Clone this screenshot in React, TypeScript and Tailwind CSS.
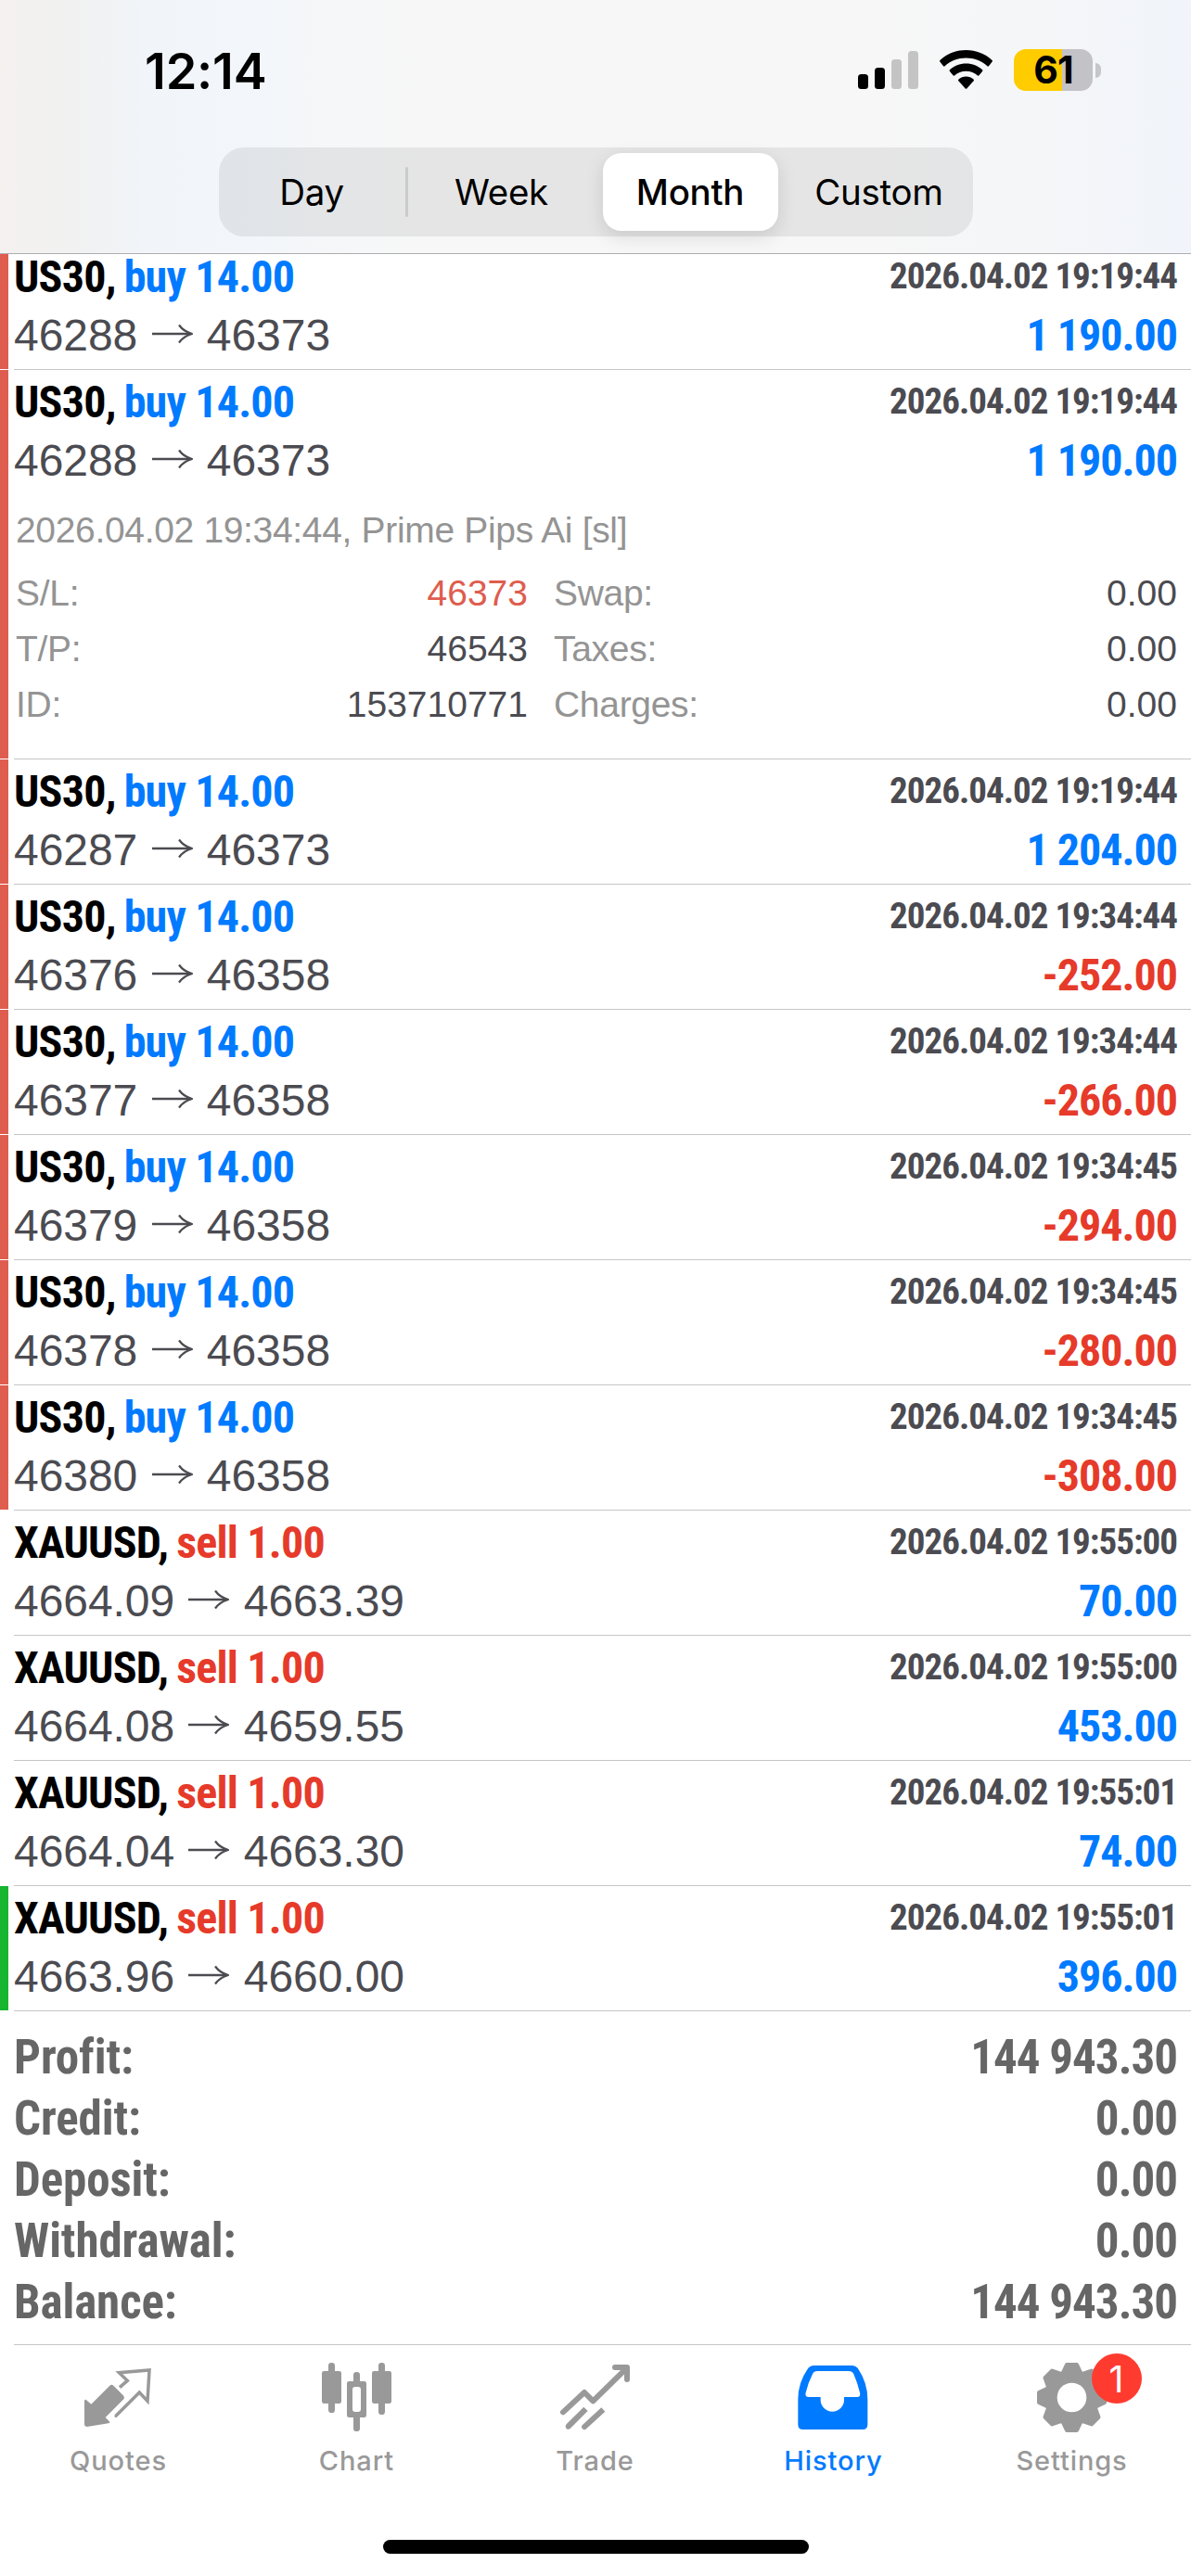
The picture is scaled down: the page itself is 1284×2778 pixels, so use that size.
import React from "react";

const COND = "font-['Roboto','Liberation_Sans',sans-serif] font-bold [font-stretch:75%]";
const HELV = "font-['Liberation_Sans',Arial,sans-serif]";
const SF = "font-['Inter','Liberation_Sans',sans-serif]";

type Deal = {
  symbol: string;
  side: "buy" | "sell";
  volume: string;
  from: string;
  to: string;
  time: string;
  profit: string;
  mark?: "red" | "green";
  details?: boolean;
};

const us30 = (from: string, to: string, time: string, profit: string, details = false): Deal => ({
  symbol: "US30",
  side: "buy",
  volume: "14.00",
  from,
  to,
  time: `2026.04.02 ${time}`,
  profit,
  mark: "red",
  details,
});

const gold = (from: string, to: string, time: string, profit: string, mark?: "green"): Deal => ({
  symbol: "XAUUSD",
  side: "sell",
  volume: "1.00",
  from,
  to,
  time: `2026.04.02 ${time}`,
  profit,
  mark,
});

const deals: Deal[] = [
  us30("46288", "46373", "19:19:44", "1 190.00"),
  us30("46288", "46373", "19:19:44", "1 190.00", true),
  us30("46287", "46373", "19:19:44", "1 204.00"),
  us30("46376", "46358", "19:34:44", "-252.00"),
  us30("46377", "46358", "19:34:44", "-266.00"),
  us30("46379", "46358", "19:34:45", "-294.00"),
  us30("46378", "46358", "19:34:45", "-280.00"),
  us30("46380", "46358", "19:34:45", "-308.00"),
  gold("4664.09", "4663.39", "19:55:00", "70.00"),
  gold("4664.08", "4659.55", "19:55:00", "453.00"),
  gold("4664.04", "4663.30", "19:55:01", "74.00"),
  gold("4663.96", "4660.00", "19:55:01", "396.00", "green"),
];

const summary = [
  ["Profit:", "144 943.30"],
  ["Credit:", "0.00"],
  ["Deposit:", "0.00"],
  ["Withdrawal:", "0.00"],
  ["Balance:", "144 943.30"],
];

function StatusBar() {
  return (
    <div className="flex h-[159px] items-start justify-between pr-[97px] pl-[156px]">
      <div className={`${SF} mt-[46px] text-[54px] leading-[62px] font-semibold tracking-[-0.2px] text-black`}>12:14</div>
      <div className="mt-[53px] flex items-start">
        <svg className="mt-[2px] h-[41px] w-[65px]" viewBox="0 0 65 41">
          <rect x="0" y="25" width="11" height="16" rx="3.5" />
          <rect x="18" y="18" width="11" height="23" rx="3.5" />
          <rect x="36" y="9" width="11" height="32" rx="3.5" fill="#c4c4c5" />
          <rect x="54" y="0" width="11" height="41" rx="3.5" fill="#c4c4c5" />
        </svg>
        <svg className="mt-[1px] ml-[23px] h-[42px] w-[57px]" viewBox="0 0 57 42">
          <path d="M28.5 0C17.600 0 7.700 4.100.400 11Q-.300 11.800.300 12.600L4 17.200Q4.800 18 5.600 17.300C11.600 11.800 19.700 8.600 28.500 8.600S45.400 11.800 51.400 17.300Q52.200 18 53 17.200L56.700 12.600Q57.300 11.800 56.600 11C49.300 4.100 39.400 0 28.500 0Z" />
          <path d="M28.500 14.400C21.700 14.400 15.500 17 10.900 21.300Q10.200 22 10.800 22.800L14.500 27.300Q15.200 28 16 27.400C19.300 24.500 23.700 22.800 28.500 22.800S37.700 24.500 41 27.400Q41.800 28 42.500 27.300L46.200 22.800Q46.800 22 46.100 21.300C41.500 17 35.300 14.400 28.500 14.400Z" />
          <path d="M28.500 28.600C25.400 28.600 22.600 29.700 20.500 31.600Q19.700 32.400 20.400 33.200L27.500 41.300Q28.500 42.300 29.500 41.300L36.600 33.200Q37.300 32.400 36.500 31.600C34.400 29.700 31.600 28.600 28.500 28.600Z" />
        </svg>
        <div className="ml-[23px] flex items-center">
          <div className="flex h-[45px] w-[85px] items-center justify-center rounded-[13px] bg-[linear-gradient(90deg,#ffcc00_61.500%,#c2c2c7_61.500%)]">
            <span className={`${SF} text-[41px] leading-[45px] font-bold tracking-[-0.8px] text-black`}>61</span>
          </div>
          <div className="ml-[3px] h-[16px] w-[6px] rounded-r-full bg-[#c5c5ca]" />
        </div>
      </div>
    </div>
  );
}

function PeriodPicker() {
  const item = "flex h-[84px] items-center justify-center pt-[1px]";
  return (
    <div className={`${SF} mx-auto flex h-[96px] w-[813px] items-center rounded-[27px] bg-black/7 text-[38.500px] font-medium tracking-[-0.3px] text-black`}>
      <div className={`${item} w-[201px]`}><span className="font-normal">Day</span></div>
      <div className="h-[54px] w-[3px] rounded-full bg-[#cbcbcd]" />
      <div className={`${item} w-[210px] pr-[8px]`}><span className="font-normal">Week</span></div>
      <div className={`${item} w-[189px] rounded-[20px] bg-white shadow-[0_6px_20px_rgba(0,0,0,0.12)]`}>Month</div>
      <div className={`${item} w-[210px] pl-[8px]`}><span className="font-normal">Custom</span></div>
    </div>
  );
}

function Header() {
  return (
    <header className="relative z-10 h-[274px] border-b border-[#adadb0] bg-[linear-gradient(90deg,#f4f1ef_0%,#f1f1f1_6%,#f1f4f8_12%,#f3f6fa_22%,#f6f7f8_30%,#f7f7f7_36%,#f7f7f7_74%,#f4f6f8_88%,#f1f4fa_100%)]">
      <StatusBar />
      <PeriodPicker />
    </header>
  );
}

function Arrow() {
  return (
    <svg className="mx-[13.300px] inline-block h-[24px] w-[48px] align-[6px]" viewBox="0 0 48 24" fill="none">
      <path d="M2 12H42" stroke="#4b4b51" strokeWidth="2.600" />
      <path d="M31 2.500Q36 9.500 45 12Q36 14.500 31 21.500" stroke="#4b4b51" strokeWidth="2.200" strokeLinejoin="round" />
    </svg>
  );
}

function DetailCell({ label, value, red }: { label: string; value: string; red?: boolean }) {
  return (
    <div className="flex justify-between">
      <span className="tracking-[-0.3px]">{label}</span>
      <span className={red ? "text-[#de5d4f]" : "text-[#4b4b51]"}>{value}</span>
    </div>
  );
}

function Details() {
  return (
    <div className={`${HELV} pt-[8px] pb-[29px] pl-[2px] text-[39px] leading-[60px] text-[#949494]`}>
      <div className="tracking-[-0.330px]">2026.04.02 19:34:44, Prime Pips Ai [sl]</div>
      <div className="mt-[8px] grid grid-cols-[552px_672px] gap-x-[28px]">
        <DetailCell label="S/L:" value="46373" red />
        <DetailCell label="Swap:" value="0.00" />
        <DetailCell label="T/P:" value="46543" />
        <DetailCell label="Taxes:" value="0.00" />
        <DetailCell label="ID:" value="153710771" />
        <DetailCell label="Charges:" value="0.00" />
      </div>
    </div>
  );
}

function DealRow({ deal }: { deal: Deal }) {
  const bar = deal.mark === "red" ? "bg-[#de5d4f]" : deal.mark === "green" ? "bg-[#17b530]" : "";
  return (
    <div className="flex">
      <div className={`mb-px w-[9px] ${bar}`} />
      <div className="ml-[6px] flex-1 border-b border-[#c6c6c8] pr-[15px]">
        <div className={`${COND} flex h-[63px] items-start justify-between pt-[7px]`}>
          <div className="text-[48px] leading-[56px] tracking-[-0.8px] text-black">
            {deal.symbol},<span className="tracking-[-2px]"> </span>
            <span className={deal.side === "buy" ? "text-[#007aff]" : "text-[#e63a2a]"}>{deal.side} {deal.volume}</span>
          </div>
          <div className="text-[39px] leading-[55px] tracking-[-1px] text-[#4b4b51]">{deal.time}</div>
        </div>
        <div className="mt-[4px] flex h-[67px] justify-between leading-[62px]">
          <div className={`${HELV} text-[48px] tracking-[-0.050px] text-[#4b4b51]`}>
            {deal.from}
            <Arrow />
            {deal.to}
          </div>
          <div className={`${COND} text-[48px] tracking-[-1px] ${deal.profit.startsWith("-") ? "text-[#e63a2a]" : "text-[#007aff]"}`}>{deal.profit}</div>
        </div>
        {deal.details && (
          <div className="-mb-[1px] pt-[1px]">
            <Details />
          </div>
        )}
      </div>
    </div>
  );
}

function QuotesIcon() {
  return (
    <svg className="h-[80px] w-[80px]" viewBox="54 45 240 240">
      <path d="M63 176Q66 171 71 176L85 188L145 128Q151 123 157 128L190 161Q194 167 190 172L131 231L145 245Q146 249 141 250L72 261Q63 261 63 253Z" fill="#999" />
      <path d="M177 134L202 112L175 86L273 78L267 178L241 150L165 226H161" fill="none" stroke="#999" strokeWidth="10.500" strokeLinejoin="miter" />
    </svg>
  );
}

function ChartIcon() {
  return (
    <svg className="h-[80px] w-[80px]" viewBox="825 45 240 240" fill="#999">
      <rect x="831" y="81" width="63" height="105" rx="7" />
      <rect x="852" y="54" width="21" height="162" rx="10" />
      <rect x="993" y="81" width="63" height="105" rx="7" />
      <rect x="1014" y="54" width="21" height="168" rx="10" />
      <rect x="933" y="84" width="21" height="40" rx="10" />
      <rect x="933" y="222" width="21" height="54" rx="10" />
      <path fillRule="evenodd" d="M919 114H968Q975 114 975 121V224Q975 231 968 231H919Q912 231 912 224V121Q912 114 919 114ZM939 132Q930 132 930 141V204Q930 213 939 213H948Q957 213 957 204V141Q957 132 948 132Z" />
    </svg>
  );
}

function TradeIcon() {
  return (
    <svg className="h-[80px] w-[80px]" viewBox="36 45 240 240" fill="none" stroke="#999" strokeWidth="18" strokeLinejoin="round">
      <path d="M51 214L120 150L148 178L252 76M219 69H258V108" strokeLinecap="round" />
      <path d="M59 261A9 9 0 0 0 75 266L131 210L118 197L62 253Q59 256 59 261Z" fill="#999" stroke="none" />
      <path d="M111 261A9 9 0 0 0 127 267L187 212L175 199L115 254Q111 257 111 261Z" fill="#999" stroke="none" />
    </svg>
  );
}

function HistoryIcon() {
  return (
    <svg className="h-[80px] w-[80px]" viewBox="806 45 240 240" fill="#007aff">
      <path
        fillRule="evenodd"
        d="M860 63H985Q996 63 1003 71Q1035 118 1035 172V254Q1035 270 1019 270H826Q810 270 810 254V172Q810 118 843 71Q850 63 860 63ZM873 81Q861 81 857 91Q843 118 835 151Q831 165 845 165H883V174A38 38 0 0 0 959 174V165H1001Q1014 165 1010 151Q1002 118 990 91Q985 81 974 81Z"
      />
    </svg>
  );
}

function SettingsIcon() {
  return (
    <svg className="h-[80px] w-[80px]" viewBox="-39.500 -40.500 80 80" fill="#999">
      <circle r="30" />
      {[0, 45, 90, 135, 180, 225, 270, 315].map((a) => (
        <path key={a} d="M-9.500-27L-5.500-35.500H5.500L9.500-27Z" transform={`rotate(${a})`} stroke="#999" strokeWidth="4" strokeLinejoin="round" />
      ))}
      <circle r="15.800" fill="#fff" />
    </svg>
  );
}

const tabs = [
  { label: "Quotes", Icon: QuotesIcon },
  { label: "Chart", Icon: ChartIcon },
  { label: "Trade", Icon: TradeIcon },
  { label: "History", Icon: HistoryIcon, active: true },
  { label: "Settings", Icon: SettingsIcon, badge: "1" },
];

function TabBar() {
  return (
    <nav className={`${SF} -ml-[1px] grid h-[210px] grid-cols-5`}>
      {tabs.map(({ label, Icon, active, badge }) => (
        <div key={label} className="flex flex-col items-center pt-[16px]">
          <div className="relative">
            <Icon />
            {badge && (
              <span className="absolute top-[-7px] left-[61px] flex h-[54px] w-[54px] items-center justify-center rounded-full bg-[#ff3b30] text-[39px] leading-none text-white">
                {badge}
              </span>
            )}
          </div>
          <div className={`mt-[9px] text-[29px] leading-[40px] font-medium tracking-[0.9px] ${active ? "text-[#007aff]" : "text-[#999]"}`}>{label}</div>
        </div>
      ))}
    </nav>
  );
}

export default function App() {
  return (
    <div className="h-[2778px] w-[1284px] overflow-hidden bg-white">
      <Header />
      <main className="-mt-[10px]">
        {deals.map((deal, i) => (
          <DealRow key={i} deal={deal} />
        ))}
        <section className={`${COND} ml-[15px] h-[360px] border-b border-[#c6c6c8] pt-[17px] pr-[15px] text-[51px] leading-[66px] text-[#666]`}>
          {summary.map(([label, value]) => (
            <div key={label} className="flex justify-between">
              <span className="tracking-[-0.1px]">{label}</span>
              <span className="tracking-[-1px]">{value}</span>
            </div>
          ))}
        </section>
      </main>
      <TabBar />
      <div className="mx-auto h-[15px] w-[459px] rounded-full bg-black" />
    </div>
  );
}
